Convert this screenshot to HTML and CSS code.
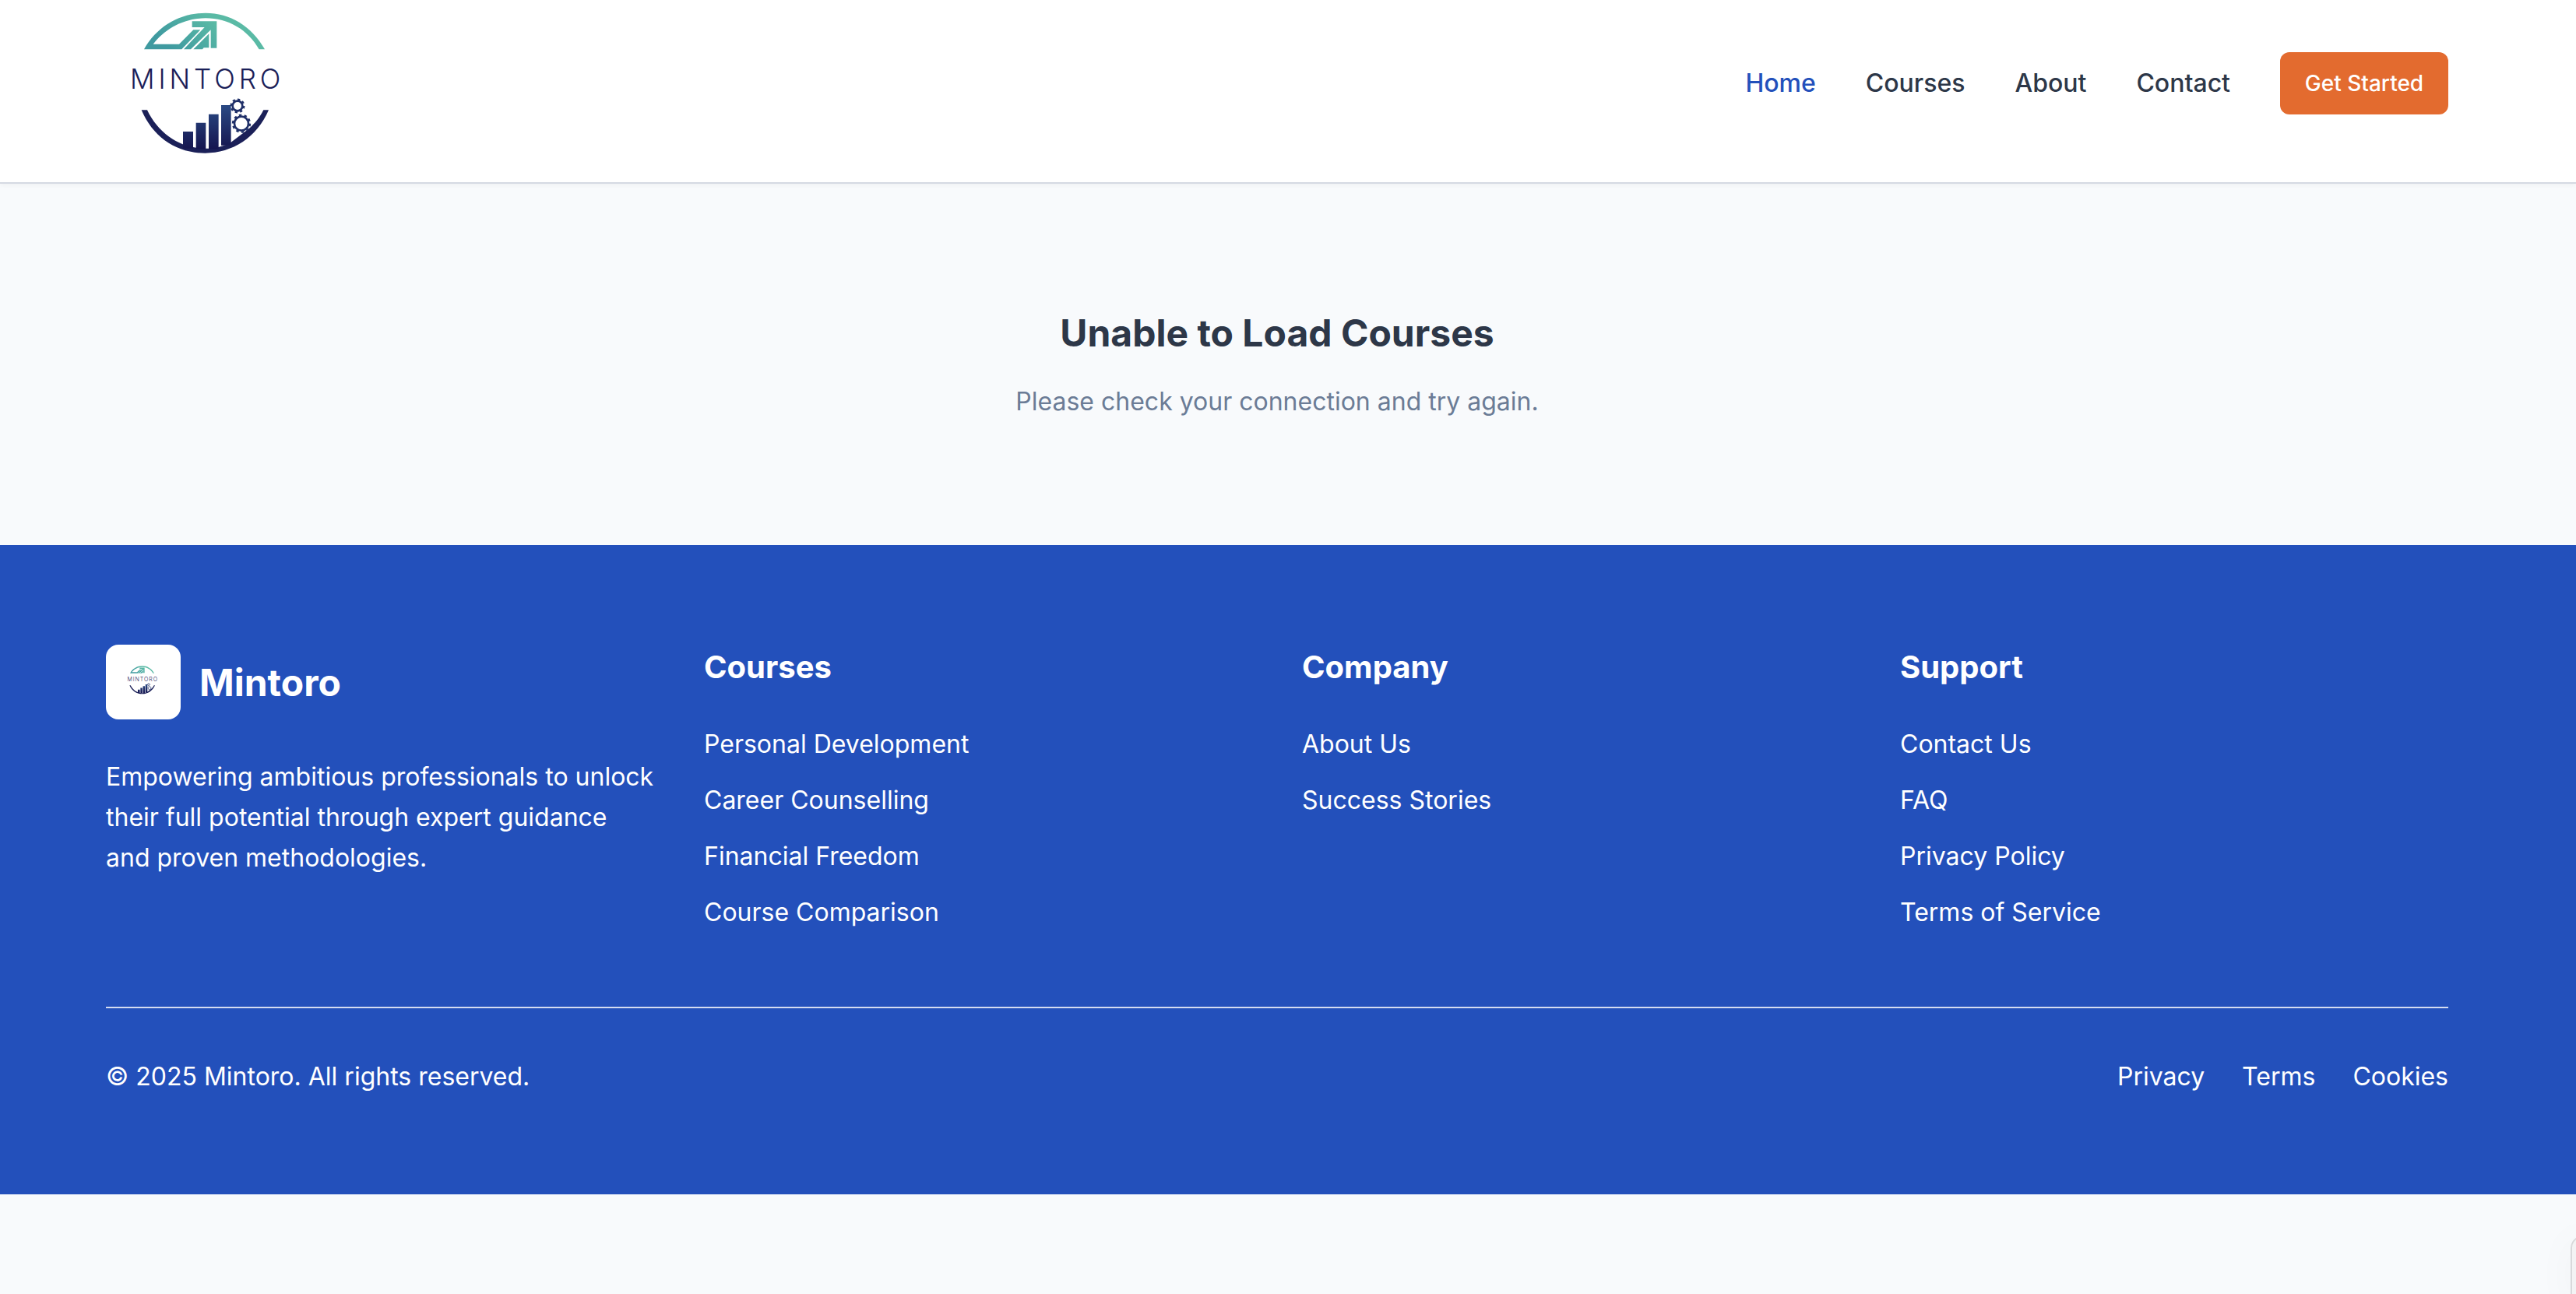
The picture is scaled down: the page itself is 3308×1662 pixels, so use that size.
FILE: index.html
```html
<!DOCTYPE html>
<html>
<head>
	<title>Mintoro</title>
	<meta charset="utf-8">
	<link rel="stylesheet" href="styles.css">
</head>
<body>
	<svg class="defs" width="0" height="0">
		<defs>
			<linearGradient id="navy" x1="0" y1="0" x2="0" y2="1">
				<stop offset="0" stop-color="#2a4a84"/>
				<stop offset="1" stop-color="#15154f"/>
			</linearGradient>
			<linearGradient id="teal" gradientUnits="userSpaceOnUse" x1="430" y1="50" x2="300" y2="190">
				<stop offset="0" stop-color="#5abaa5"/>
				<stop offset="1" stop-color="#3f9aa0"/>
			</linearGradient>
			<symbol id="logo" viewBox="0 0 900 720">
				<path fill="url(#teal)" d="M195 190C245 100 335 50 432 50C525 50 610 100 660 190H638C595 115 520 70 432 70C345 70 275 112 230 170H330L385 115H412L340 190Z"/>
				<path fill="url(#teal)" d="M380 82H475V185H452V115L375 190H348L428 105H380Z"/>
				<path fill="url(#teal)" d="M385 190L445 130V184H425L420 190Z"/>
				<text class="logo-text" x="141" y="342" textLength="580" lengthAdjust="spacing">MINTORO</text>
				<path fill="#1b2058" d="M185 424H207C250 515 335 572 430 572C465 572 500 565 530 548L600 495C622 475 640 455 655 424H675C630 530 535 590 430 590C320 590 230 530 185 424Z"/>
				<path fill="url(#navy)" d="M345 507H384V572H345ZM395 473H433V575H395ZM444 440H482V575H444ZM492 405H530V560H492Z"/>
				<circle class="gear" cx="555" cy="408" r="19"/>
				<circle class="gear-teeth" cx="555" cy="408" r="25" pathLength="16"/>
				<circle class="gear" cx="570" cy="476" r="27"/>
				<circle class="gear-teeth" cx="570" cy="476" r="33" pathLength="20"/>
			</symbol>
		</defs>
	</svg>

	<header class="site-header">
		<svg class="header-logo"><use href="#logo"/></svg>
		<nav class="main-nav">
			<a class="active" href="#">Home</a>
			<a href="#">Courses</a>
			<a href="#">About</a>
			<a href="#">Contact</a>
			<a class="btn-start" href="#">Get Started</a>
		</nav>
	</header>

	<main class="status">
		<h2>Unable to Load Courses</h2>
		<p>Please check your connection and try again.</p>
	</main>

	<footer class="site-footer">
		<div class="footer-grid">
			<div class="footer-brand">
				<div class="brand-row">
					<div class="brand-box"><svg class="brand-logo"><use href="#logo"/></svg></div>
					<span class="brand-name">Mintoro</span>
				</div>
				<p>Empowering ambitious professionals to unlock their full potential through expert guidance and proven methodologies.</p>
			</div>
			<div class="footer-col">
				<h3>Courses</h3>
				<a href="#">Personal Development</a>
				<a href="#">Career Counselling</a>
				<a href="#">Financial Freedom</a>
				<a href="#">Course Comparison</a>
			</div>
			<div class="footer-col">
				<h3>Company</h3>
				<a href="#">About Us</a>
				<a href="#">Success Stories</a>
			</div>
			<div class="footer-col">
				<h3>Support</h3>
				<a href="#">Contact Us</a>
				<a href="#">FAQ</a>
				<a href="#">Privacy Policy</a>
				<a href="#">Terms of Service</a>
			</div>
		</div>
		<div class="footer-bottom">
			<span>© 2025 Mintoro. All rights reserved.</span>
			<div class="legal">
				<a href="#">Privacy</a>
				<a href="#">Terms</a>
				<a href="#">Cookies</a>
			</div>
		</div>
	</footer>

	<div class="corner-panel"></div>
</body>
</html>
```

FILE: styles.css
```css
* {
	padding: 0;
	margin: 0;
	box-sizing: border-box;
}
html, body {
	height: 100%;
}
body {
	font-family: Inter, "Liberation Sans", sans-serif;
	background: #f8fafc;
	color: #2d3748;
	overflow: hidden;
}
a {
	color: inherit;
	text-decoration: none;
}
.defs {
	position: absolute;
}

/* logo */
.logo-text {
	font-family: Inter, sans-serif;
	font-size: 105px;
	font-weight: 300;
	fill: #1b2058;
}
.gear {
	fill: none;
	stroke: #1f2f68;
	stroke-width: 8;
}
.gear-teeth {
	fill: none;
	stroke: #1f2f68;
	stroke-width: 7;
	stroke-dasharray: 1 1;
}

/* header */
.site-header {
	position: relative;
	height: 236px;
	padding: 0 164px 0 120px;
	display: flex;
	align-items: flex-start;
	justify-content: space-between;
	background: #fff;
	border-bottom: 2px solid #d5d9e2;
	box-shadow: 0 2px 6px rgba(0, 0, 0, 0.04);
}
.header-logo {
	width: 300px;
	height: 240px;
}
.main-nav {
	height: 214px;
	display: flex;
	align-items: center;
	gap: 64px;
	font-size: 32px;
	font-weight: 500;
	line-height: 38px;
}
.main-nav .active {
	color: #2350bb;
}
.main-nav .btn-start {
	width: 216px;
	height: 80px;
	display: flex;
	align-items: center;
	justify-content: center;
	background: #e36b2f;
	color: #fff;
	font-size: 28px;
	border-radius: 12px;
}

/* error state */
.status {
	height: 464px;
	padding: 160px 164px 0 136px;
	text-align: center;
}
.status h2 {
	font-size: 48px;
	font-weight: 700;
	line-height: 64px;
}
.status p {
	margin-top: 30px;
	font-size: 32px;
	line-height: 52px;
	color: #6b7c96;
}

/* footer */
.site-footer {
	height: 834px;
	padding: 128px 164px 0 136px;
	background: #2350bb;
	color: #fff;
	font-size: 32px;
}
.footer-grid {
	height: 467px;
	display: grid;
	grid-template-columns: repeat(4, 704px);
	gap: 64px;
	border-bottom: 2px solid rgba(255, 255, 255, 0.8);
}
.brand-row {
	display: flex;
	align-items: center;
	gap: 24px;
}
.brand-box {
	width: 96px;
	height: 96px;
	display: flex;
	align-items: center;
	justify-content: center;
	background: #fff;
	border-radius: 16px;
}
.brand-logo {
	width: 60px;
	height: 48px;
}
.brand-name {
	font-size: 48px;
	font-weight: 700;
}
.footer-brand p {
	margin-top: 48px;
	line-height: 52px;
}
.footer-col {
	display: flex;
	flex-direction: column;
	align-items: flex-start;
}
.footer-col h3 {
	font-size: 40px;
	font-weight: 700;
	line-height: 58px;
	margin-bottom: 44px;
}
.footer-col a {
	line-height: 52px;
	margin-bottom: 20px;
}
.footer-bottom {
	margin-top: 62px;
	display: flex;
	justify-content: space-between;
	line-height: 52px;
}
.legal {
	display: flex;
	gap: 48px;
}

.corner-panel {
	position: absolute;
	right: -20px;
	bottom: -20px;
	width: 27px;
	height: 95px;
	background: #f3f3f4;
	border: 2px solid #d8d9db;
	border-radius: 16px 0 0 0;
	box-shadow: 0 0 50px rgba(0, 0, 0, 0.04);
}
```
